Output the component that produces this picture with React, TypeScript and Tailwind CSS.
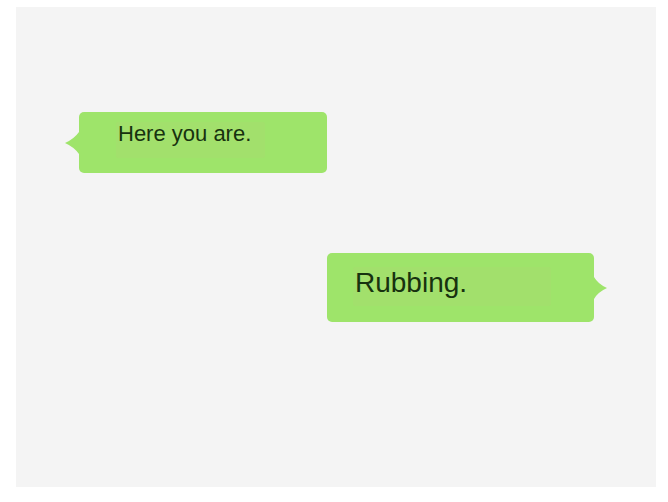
export default function App() {
  return (
    <div className="w-[668px] h-[502px] bg-white pt-[7px] pl-[16px]">
      <div
        className="w-[640px] h-[480px] bg-[#f4f4f4] flex flex-col"
        style={{ fontFamily: '"Liberation Sans", Arial, sans-serif' }}
      >
        {/* incoming bubble */}
        <div className="flex items-center mt-[105px] ml-[49px]">
          <svg width="14" height="22" viewBox="0 0 14 22" className="block">
            <path d="M14 0 L14 22 Q9 15 0 11 Q9 7 14 0 Z" fill="#9ee46a" />
          </svg>
          <div className="w-[248px] h-[61px] rounded-[5px] bg-[#9ee46a] pl-[37px] pt-[10px]">
            <div className="w-[149px] h-[36px] bg-[#a2e06c] rounded-[2px] pl-[2px] text-[22px] leading-[24px] text-[#17320f]">
              Here you are.
            </div>
          </div>
        </div>

        {/* outgoing bubble */}
        <div className="flex items-center mt-[80px] ml-[311px]">
          <div className="w-[267px] h-[69px] rounded-[5px] bg-[#9ee46a] pl-[26px] pt-[14px]">
            <div className="w-[198px] h-[39px] bg-[#a2e06c] rounded-[2px] pl-[2px] text-[28px] leading-[32px] text-[#17320f]">
              Rubbing.
            </div>
          </div>
          <svg width="13" height="22" viewBox="0 0 13 22" className="block">
            <path d="M0 0 L0 22 Q4 15 13 11 Q4 7 0 0 Z" fill="#9ee46a" />
          </svg>
        </div>
      </div>
    </div>
  );
}
